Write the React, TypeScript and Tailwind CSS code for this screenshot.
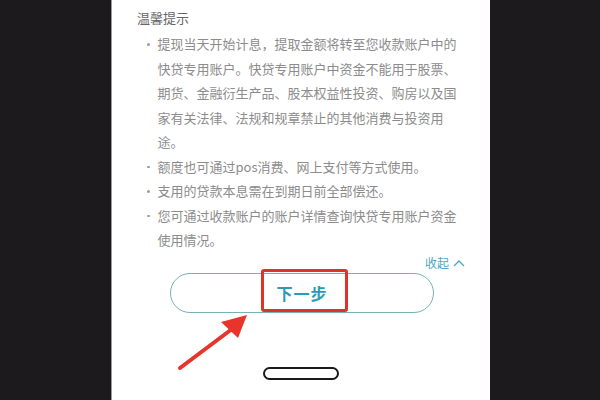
import React from "react";

const items = [
  "提现当天开始计息，提取金额将转至您收款账户中的快贷专用账户。快贷专用账户中资金不能用于股票、期货、金融衍生产品、股本权益性投资、购房以及国家有关法律、法规和规章禁止的其他消费与投资用途。",
  "额度也可通过pos消费、网上支付等方式使用。",
  "支用的贷款本息需在到期日前全部偿还。",
  "您可通过收款账户的账户详情查询快贷专用账户资金使用情况。",
];

export default function App() {
  return (
    <div className="relative flex h-[400px] w-[600px] overflow-hidden bg-[#1c1a1d] font-['Noto_Sans_CJK_SC',sans-serif]">
      <div className="ml-[111px] flex h-full w-[379px] flex-col border-l border-[#9a9a9a] bg-white">
        <div className="pl-[25px] pt-[8px] text-[13px] leading-[20px] text-[#666]">温馨提示</div>
        <ul className="mt-[4px] pl-[35px]">
          {items.map((t) => (
            <li key={t} className="flex text-[13px] leading-[24.5px] text-[#8c8c8c]">
              <span className="mt-[11px] mr-[8px] h-[2.5px] w-[2.5px] shrink-0 rounded-full bg-[#9a9a9a]" />
              <span className="w-[300px]">{t}</span>
            </li>
          ))}
        </ul>
        <div className="mt-[2px] flex items-center justify-end gap-[4px] pr-[25px] text-[12px] leading-[16px] text-[#4aa8c0]">
          收起
          <svg width="12" height="8" viewBox="0 0 12 8" fill="none" stroke="#4aa8c0" strokeWidth="1.3">
            <path d="M1 7 L6 2 L11 7" />
          </svg>
        </div>
        <div className="relative ml-[58px] mt-[2px] flex h-[40px] w-[264px] items-center justify-center rounded-full border-[1.5px] border-[#79b0b6]">
          <span className="text-[16px] font-bold tracking-[1px] text-[#2b9bb4]">下一步</span>
          <div className="absolute left-[90px] top-[-5px] h-[43px] w-[87px] rounded-[3px] border-[3px] border-[#e0322a]" />
        </div>
        <div className="mt-[54px] ml-[151px] h-[13px] w-[76px] rounded-full border-2 border-[#1a1a1a] bg-white" />
      </div>
      <svg className="absolute left-0 top-0" width="600" height="400" viewBox="0 0 600 400">
        <path d="M180 368 L232 329" stroke="#e8342a" strokeWidth="4" strokeLinecap="round" />
        <path d="M247 315 L221 322 L238 338 Z" fill="#e8342a" />
      </svg>
    </div>
  );
}
